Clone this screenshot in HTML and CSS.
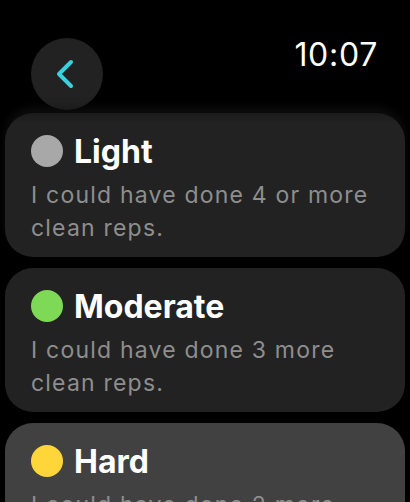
FILE: index.html
```html
<!DOCTYPE html>
<html lang="en">
<head>
    <meta charset="UTF-8">
    <meta name="viewport" content="width=device-width, initial-scale=1.0">
    <title>Effort</title>
    <link rel="stylesheet" href="styles.css">
</head>
<body>
    <div class="header">
        <button class="back-btn" aria-label="Back">
            <svg width="20" height="30" viewBox="0 0 20 30">
                <path d="M16 3 L4 15 L16 27" fill="none" stroke="#38d1df" stroke-width="4" stroke-linecap="round" stroke-linejoin="round"/>
            </svg>
        </button>
        <div class="time">10:07</div>
    </div>

    <div class="list">
        <div class="card first">
            <div class="card-title"><span class="dot light"></span>Light</div>
            <div class="card-desc">I could have done 4 or more clean reps.</div>
        </div>
        <div class="card">
            <div class="card-title"><span class="dot moderate"></span>Moderate</div>
            <div class="card-desc">I could have done 3 more clean reps.</div>
        </div>
        <div class="card selected">
            <div class="card-title"><span class="dot hard"></span>Hard</div>
            <div class="card-desc">I could have done 2 more clean reps.</div>
        </div>
    </div>
</body>
</html>
```

FILE: styles.css
```css
body { margin: 0; background: #000; color: #fff; font-family: Inter, "Noto Sans", sans-serif; height: 502px; overflow: hidden; }

.header { display: flex; justify-content: space-between; align-items: flex-start; height: 113px; box-sizing: border-box; padding: 38px 32px 0 31px; }
.back-btn { width: 72px; height: 72px; border-radius: 50%; border: none; background: #222; display: flex; align-items: center; justify-content: center; padding: 0 4px 0 0; }
.back-btn svg { display: block; }
.time { font-size: 32px; line-height: 32px; margin-top: 1px; font-weight: 400; letter-spacing: 0.7px; }

.list { display: flex; flex-direction: column; gap: 11px; padding: 0 5px; }
.card { background: #222; border-radius: 28px; padding: 19px 26px 12px 26px; }
.card.first { background: linear-gradient(#1b1b1b, #222 10px); box-shadow: 0 -6px 8px rgba(20, 20, 20, 0.6); }
.card.selected { background: #414141; }
.card-title { display: flex; align-items: center; height: 38px; font-size: 32px; font-weight: 700; gap: 11px; }
.card-desc { margin-top: 9px; font-size: 23px; line-height: 33px; color: #8e8e8e; letter-spacing: 1.2px; }

.dot { width: 32px; height: 32px; border-radius: 50%; flex: none; }
.dot.light { background: #a8a8a8; }
.dot.moderate { background: #7ed957; }
.dot.hard { background: #fed63a; }
```
